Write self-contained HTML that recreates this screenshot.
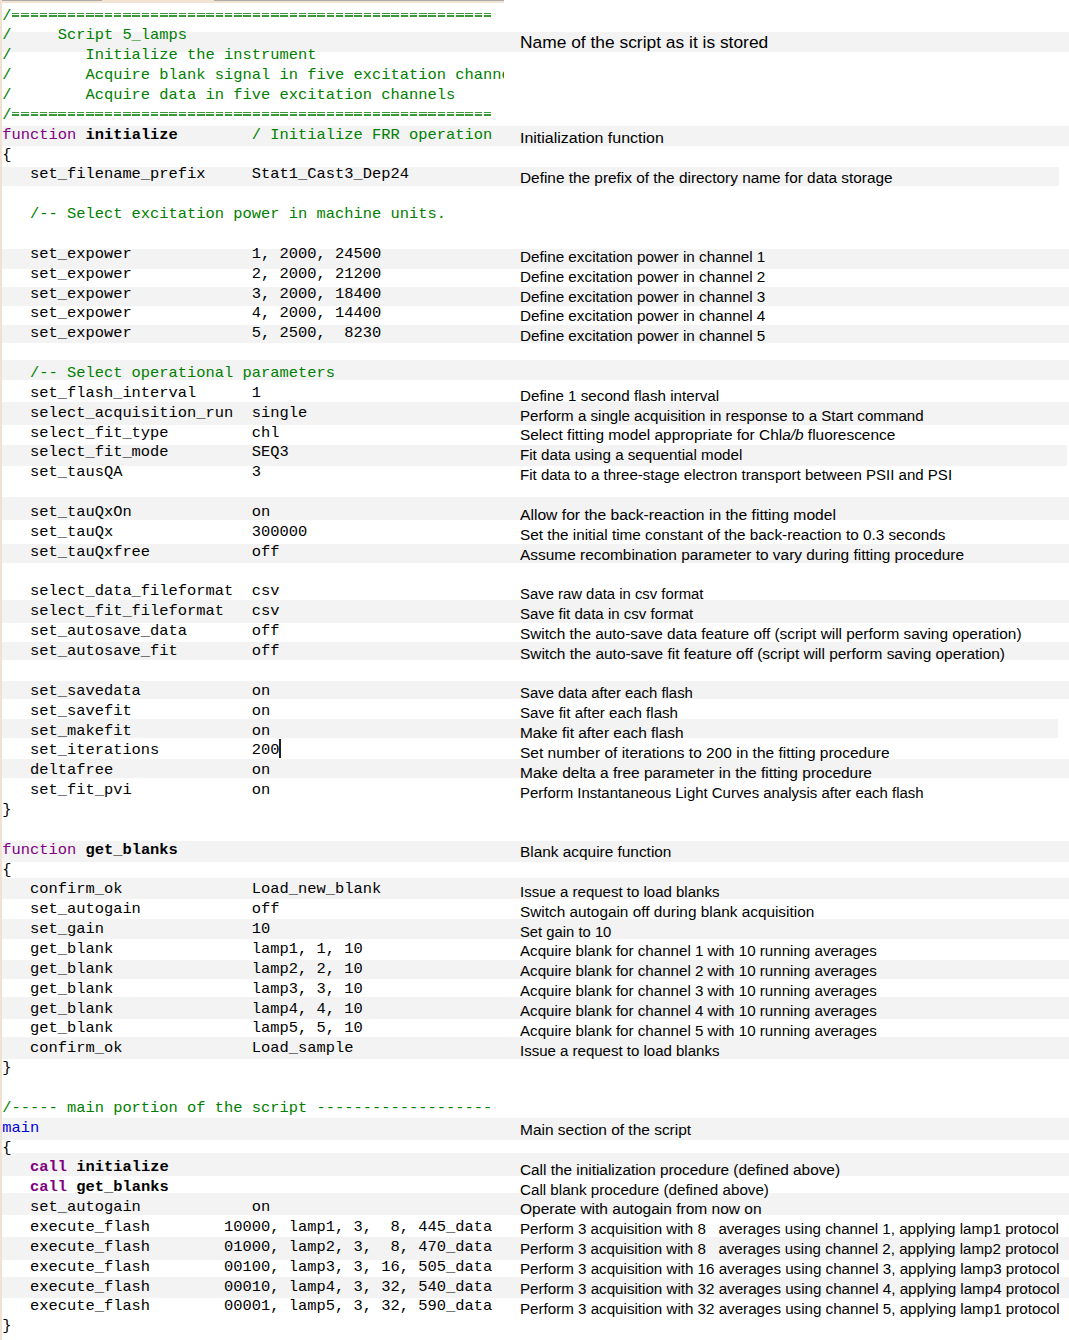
<!DOCTYPE html>
<html><head><meta charset="utf-8"><style>
html,body{margin:0;padding:0;background:#fff;}
body{width:1069px;height:1340px;position:relative;overflow:hidden;}
.s{position:absolute;left:0;background:#f3f3f3;}
.lb{position:absolute;left:0;top:0;width:2px;height:1340px;background:#f0e2d2;}
.tb{position:absolute;left:0;top:0;width:504px;height:3px;background:#f2e3d2;}
.tg{position:absolute;top:0;height:1px;background:#aeaaa5;}
.code{position:absolute;left:0;top:0;width:504px;height:1340px;overflow:hidden;}
.cl{position:absolute;left:2.2px;margin:0;font-family:"Liberation Mono",monospace;font-size:15.42px;line-height:20px;height:20px;color:#000;white-space:pre;}
.g{color:#008000} .p{color:#800080} .pb{color:#800080;font-weight:bold} .b{font-weight:bold} .m{color:#0000e0;}
.eq{position:absolute;width:481.18px;background:repeating-linear-gradient(to right,#3a9a3a 0,#3a9a3a 7.5px,transparent 7.5px,transparent 9.254px);}
.cur{position:absolute;left:279.3px;top:738.5px;width:1.6px;height:19px;background:#222;}
.r{position:absolute;left:519.5px;transform-origin:0 0;font-family:"Liberation Sans",sans-serif;font-size:15.3px;line-height:20.0px;color:#000;white-space:pre;}
</style></head><body>

<div class="s" style="top:32px;height:20px;width:1069px"></div>
<div class="s" style="top:126px;height:20px;width:1069px"></div>
<div class="s" style="top:167px;height:19px;width:1059px"></div>
<div class="s" style="top:249px;height:20px;width:1069px"></div>
<div class="s" style="top:287px;height:19px;width:1069px"></div>
<div class="s" style="top:325px;height:18px;width:1069px"></div>
<div class="s" style="top:360px;height:20px;width:1069px"></div>
<div class="s" style="top:402px;height:23px;width:1069px"></div>
<div class="s" style="top:445px;height:21px;width:1067px"></div>
<div class="s" style="top:497px;height:23px;width:1069px"></div>
<div class="s" style="top:544px;height:19px;width:1069px"></div>
<div class="s" style="top:600px;height:23px;width:1069px"></div>
<div class="s" style="top:642px;height:18px;width:1069px"></div>
<div class="s" style="top:681px;height:18px;width:1069px"></div>
<div class="s" style="top:719px;height:19px;width:1058px"></div>
<div class="s" style="top:759px;height:19px;width:1069px"></div>
<div class="s" style="top:841px;height:21px;width:1069px"></div>
<div class="s" style="top:878px;height:21px;width:1069px"></div>
<div class="s" style="top:919px;height:20px;width:1069px"></div>
<div class="s" style="top:960px;height:19px;width:1069px"></div>
<div class="s" style="top:997px;height:22px;width:1069px"></div>
<div class="s" style="top:1037px;height:22px;width:1069px"></div>
<div class="s" style="top:1118px;height:22px;width:1069px"></div>
<div class="s" style="top:1153px;height:23px;width:1069px"></div>
<div class="s" style="top:1193px;height:22px;width:1069px"></div>
<div class="s" style="top:1237px;height:23px;width:1069px"></div>
<div class="s" style="top:1277px;height:21px;width:1069px"></div>
<div class="tb"></div><div class="tg" style="left:0;width:102px"></div><div class="tg" style="left:214px;width:290px"></div><div class="lb"></div>
<div class="code"><div class="cl" style="top:5.54px"><span class="g">/</span></div>
<div class="cl" style="top:25.40px"><span class="g">/     Script 5_lamps</span></div>
<div class="cl" style="top:45.26px"><span class="g">/        Initialize the instrument</span></div>
<div class="cl" style="top:65.12px"><span class="g">/        Acquire blank signal in five excitation channels</span></div>
<div class="cl" style="top:84.98px"><span class="g">/        Acquire data in five excitation channels</span></div>
<div class="cl" style="top:104.84px"><span class="g">/</span></div>
<div class="cl" style="top:124.70px"><span class="p">function</span> <span class="b">initialize</span>        <span class="g">/ Initialize FRR operation</span></div>
<div class="cl" style="top:144.56px">{</div>
<div class="cl" style="top:164.42px">   set_filename_prefix     Stat1_Cast3_Dep24</div>
<div class="cl" style="top:184.28px"></div>
<div class="cl" style="top:204.14px"><span class="g">   /-- Select excitation power in machine units.</span></div>
<div class="cl" style="top:224.00px"></div>
<div class="cl" style="top:243.86px">   set_expower             1, 2000, 24500</div>
<div class="cl" style="top:263.72px">   set_expower             2, 2000, 21200</div>
<div class="cl" style="top:283.58px">   set_expower             3, 2000, 18400</div>
<div class="cl" style="top:303.44px">   set_expower             4, 2000, 14400</div>
<div class="cl" style="top:323.30px">   set_expower             5, 2500,  8230</div>
<div class="cl" style="top:343.16px"></div>
<div class="cl" style="top:363.02px"><span class="g">   /-- Select operational parameters</span></div>
<div class="cl" style="top:382.88px">   set_flash_interval      1</div>
<div class="cl" style="top:402.74px">   select_acquisition_run  single</div>
<div class="cl" style="top:422.60px">   select_fit_type         chl</div>
<div class="cl" style="top:442.46px">   select_fit_mode         SEQ3</div>
<div class="cl" style="top:462.32px">   set_tausQA              3</div>
<div class="cl" style="top:482.18px"></div>
<div class="cl" style="top:502.04px">   set_tauQxOn             on</div>
<div class="cl" style="top:521.90px">   set_tauQx               300000</div>
<div class="cl" style="top:541.76px">   set_tauQxfree           off</div>
<div class="cl" style="top:561.62px"></div>
<div class="cl" style="top:581.48px">   select_data_fileformat  csv</div>
<div class="cl" style="top:601.34px">   select_fit_fileformat   csv</div>
<div class="cl" style="top:621.20px">   set_autosave_data       off</div>
<div class="cl" style="top:641.06px">   set_autosave_fit        off</div>
<div class="cl" style="top:660.92px"></div>
<div class="cl" style="top:680.78px">   set_savedata            on</div>
<div class="cl" style="top:700.64px">   set_savefit             on</div>
<div class="cl" style="top:720.50px">   set_makefit             on</div>
<div class="cl" style="top:740.36px">   set_iterations          200</div>
<div class="cl" style="top:760.22px">   deltafree               on</div>
<div class="cl" style="top:780.08px">   set_fit_pvi             on</div>
<div class="cl" style="top:799.94px">}</div>
<div class="cl" style="top:819.80px"></div>
<div class="cl" style="top:839.66px"><span class="p">function</span> <span class="b">get_blanks</span></div>
<div class="cl" style="top:859.52px">{</div>
<div class="cl" style="top:879.38px">   confirm_ok              Load_new_blank</div>
<div class="cl" style="top:899.24px">   set_autogain            off</div>
<div class="cl" style="top:919.10px">   set_gain                10</div>
<div class="cl" style="top:938.96px">   get_blank               lamp1, 1, 10</div>
<div class="cl" style="top:958.82px">   get_blank               lamp2, 2, 10</div>
<div class="cl" style="top:978.68px">   get_blank               lamp3, 3, 10</div>
<div class="cl" style="top:998.54px">   get_blank               lamp4, 4, 10</div>
<div class="cl" style="top:1018.40px">   get_blank               lamp5, 5, 10</div>
<div class="cl" style="top:1038.26px">   confirm_ok              Load_sample</div>
<div class="cl" style="top:1058.12px">}</div>
<div class="cl" style="top:1077.98px"></div>
<div class="cl" style="top:1097.84px"><span class="g">/----- main portion of the script -------------------</span></div>
<div class="cl" style="top:1117.70px"><span class="m">main</span></div>
<div class="cl" style="top:1137.56px">{</div>
<div class="cl" style="top:1157.42px">   <span class="pb">call</span> <span class="b">initialize</span></div>
<div class="cl" style="top:1177.28px">   <span class="pb">call</span> <span class="b">get_blanks</span></div>
<div class="cl" style="top:1197.14px">   set_autogain            on</div>
<div class="cl" style="top:1217.00px">   execute_flash        10000, lamp1, 3,  8, 445_data</div>
<div class="cl" style="top:1236.86px">   execute_flash        01000, lamp2, 3,  8, 470_data</div>
<div class="cl" style="top:1256.72px">   execute_flash        00100, lamp3, 3, 16, 505_data</div>
<div class="cl" style="top:1276.58px">   execute_flash        00010, lamp4, 3, 32, 540_data</div>
<div class="cl" style="top:1296.44px">   execute_flash        00001, lamp5, 3, 32, 590_data</div>
<div class="cl" style="top:1316.30px">}</div></div>
<div class="r" style="top:127.81px;transform:scaleX(1.0437)">Initialization function</div>
<div class="r" style="top:167.50px;transform:scaleX(1.0049)">Define the prefix of the directory name for data storage</div>
<div class="r" style="top:246.88px;transform:scaleX(0.9980)">Define excitation power in channel 1</div>
<div class="r" style="top:266.73px;transform:scaleX(0.9980)">Define excitation power in channel 2</div>
<div class="r" style="top:286.57px;transform:scaleX(0.9980)">Define excitation power in channel 3</div>
<div class="r" style="top:306.42px;transform:scaleX(0.9980)">Define excitation power in channel 4</div>
<div class="r" style="top:326.26px;transform:scaleX(0.9980)">Define excitation power in channel 5</div>
<div class="r" style="top:385.80px;transform:scaleX(0.9924)">Define 1 second flash interval</div>
<div class="r" style="top:405.64px;transform:scaleX(0.9870)">Perform a single acquisition in response to a Start command</div>
<div class="r" style="top:425.49px;transform:scaleX(1.0076)">Select fitting model appropriate for Chl<i>a/b</i> fluorescence</div>
<div class="r" style="top:445.33px;transform:scaleX(0.9901)">Fit data using a sequential model</div>
<div class="r" style="top:465.18px;transform:scaleX(0.9828)">Fit data to a three-stage electron transport between PSII and PSI</div>
<div class="r" style="top:504.87px;transform:scaleX(1.0239)">Allow for the back-reaction in the fitting model</div>
<div class="r" style="top:524.71px;transform:scaleX(1.0007)">Set the initial time constant of the back-reaction to 0.3 seconds</div>
<div class="r" style="top:544.56px;transform:scaleX(1.0082)">Assume recombination parameter to vary during fitting procedure</div>
<div class="r" style="top:584.25px;transform:scaleX(0.9722)">Save raw data in csv format</div>
<div class="r" style="top:604.09px;transform:scaleX(0.9845)">Save fit data in csv format</div>
<div class="r" style="top:623.94px;transform:scaleX(1.0054)">Switch the auto-save data feature off (script will perform saving operation)</div>
<div class="r" style="top:643.78px;transform:scaleX(1.0084)">Switch the auto-save fit feature off (script will perform saving operation)</div>
<div class="r" style="top:683.47px;transform:scaleX(0.9726)">Save data after each flash</div>
<div class="r" style="top:703.32px;transform:scaleX(0.9885)">Save fit after each flash</div>
<div class="r" style="top:723.16px;transform:scaleX(1.0075)">Make fit after each flash</div>
<div class="r" style="top:743.01px;transform:scaleX(1.0132)">Set number of iterations to 200 in the fitting procedure</div>
<div class="r" style="top:762.85px;transform:scaleX(1.0121)">Make delta a free parameter in the fitting procedure</div>
<div class="r" style="top:782.70px;transform:scaleX(0.9766)">Perform Instantaneous Light Curves analysis after each flash</div>
<div class="r" style="top:842.23px;transform:scaleX(1.0061)">Blank acquire function</div>
<div class="r" style="top:881.92px;transform:scaleX(0.9811)">Issue a request to load blanks</div>
<div class="r" style="top:901.77px;transform:scaleX(1.0038)">Switch autogain off during blank acquisition</div>
<div class="r" style="top:921.61px;transform:scaleX(0.9677)">Set gain to 10</div>
<div class="r" style="top:941.46px;transform:scaleX(0.9894)">Acquire blank for channel 1 with 10 running averages</div>
<div class="r" style="top:961.30px;transform:scaleX(0.9894)">Acquire blank for channel 2 with 10 running averages</div>
<div class="r" style="top:981.15px;transform:scaleX(0.9894)">Acquire blank for channel 3 with 10 running averages</div>
<div class="r" style="top:1000.99px;transform:scaleX(0.9894)">Acquire blank for channel 4 with 10 running averages</div>
<div class="r" style="top:1020.84px;transform:scaleX(0.9894)">Acquire blank for channel 5 with 10 running averages</div>
<div class="r" style="top:1040.68px;transform:scaleX(0.9811)">Issue a request to load blanks</div>
<div class="r" style="top:1120.06px;transform:scaleX(1.0113)">Main section of the script</div>
<div class="r" style="top:1159.75px;transform:scaleX(1.0035)">Call the initialization procedure (defined above)</div>
<div class="r" style="top:1179.60px;transform:scaleX(0.9923)">Call blank procedure (defined above)</div>
<div class="r" style="top:1199.44px;transform:scaleX(1.0148)">Operate with autogain from now on</div>
<div class="r" style="top:1219.29px;transform:scaleX(0.9888)">Perform 3 acquisition with 8&nbsp;&nbsp; averages using channel 1, applying lamp1 protocol</div>
<div class="r" style="top:1239.13px;transform:scaleX(0.9888)">Perform 3 acquisition with 8&nbsp;&nbsp; averages using channel 2, applying lamp2 protocol</div>
<div class="r" style="top:1258.98px;transform:scaleX(0.9901)">Perform 3 acquisition with 16 averages using channel 3, applying lamp3 protocol</div>
<div class="r" style="top:1278.82px;transform:scaleX(0.9901)">Perform 3 acquisition with 32 averages using channel 4, applying lamp4 protocol</div>
<div class="r" style="top:1298.67px;transform:scaleX(0.9901)">Perform 3 acquisition with 32 averages using channel 5, applying lamp1 protocol</div>
<div class="r" style="top:32.32px;font-size:17.2px;transform:scaleX(1.0111)">Name of the script as it is stored</div>
<div class="eq" style="left:11.70px;top:12.64px;height:1.4px"></div>
<div class="eq" style="left:11.70px;top:15.14px;height:1.5px"></div>
<div class="eq" style="left:11.70px;top:111.94px;height:1.4px"></div>
<div class="eq" style="left:11.70px;top:114.44px;height:1.5px"></div>
<div class="cur"></div>
</body></html>
